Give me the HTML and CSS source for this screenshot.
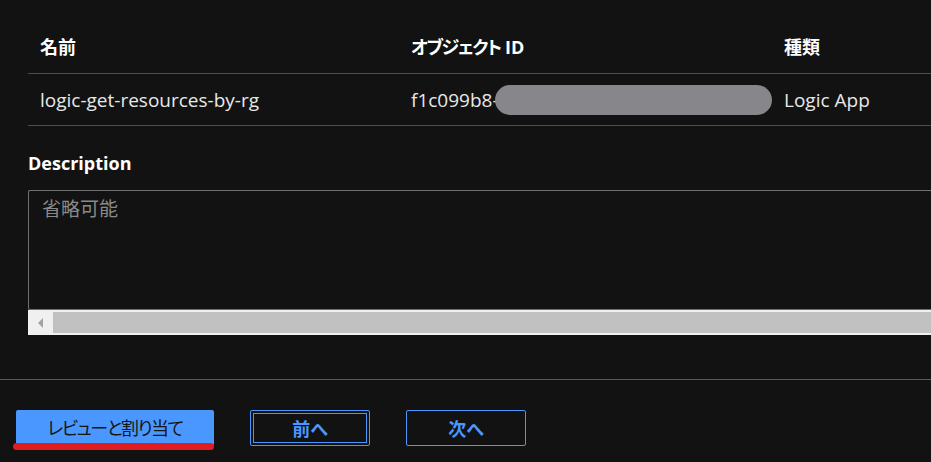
FILE: index.html
```html
<!DOCTYPE html>
<html>

<head>
    <title>割り当て</title>
    <link rel="stylesheet" href="styles.css">
</head>

<body>
    <div class="resource-table">
        <div class="table-row table-head">
            <div class="cell">名前</div>
            <div class="cell"><span class="tight">オブジェクト</span>&nbsp;ID</div>
            <div class="cell">種類</div>
        </div>
        <div class="table-row">
            <div class="cell">logic-get-resources-by-rg</div>
            <div class="cell">f1c099b8-<span class="redacted"></span></div>
            <div class="cell">Logic App</div>
        </div>
    </div>

    <div class="form-group">
        <label class="field-label">Description</label>
        <div class="textarea-box">
            <span class="placeholder">省略可能</span>
        </div>
        <div class="h-scrollbar">
            <span class="scroll-arrow"></span>
            <span class="scroll-thumb"></span>
        </div>
    </div>

    <div class="footer">
        <div class="primary-wrap">
            <button class="btn btn-primary">レビューと割り当て</button>
            <span class="highlight-mark"></span>
        </div>
        <button class="btn btn-outline focused"><span>前へ</span></button>
        <button class="btn btn-outline"><span>次へ</span></button>
    </div>
</body>

</html>
```

FILE: styles.css
```css
:root {
    --bg-color: #121212;
    --text-color: #e8e8e8;
    --text-strong: #ffffff;
    --text-muted: #8a8a8a;
    --line-color: #4e4e4e;
    --accent: #4a98ff;
    --mark-red: #e31c1f;
}

* {
    box-sizing: border-box;
    margin: 0;
    padding: 0;
}

body {
    width: 931px;
    height: 462px;
    overflow: hidden;
    background: var(--bg-color);
    color: var(--text-color);
    font-family: "Open Sans", "Noto Sans CJK JP", sans-serif;
    font-size: 19px;
    font-feature-settings: "palt";
}

.resource-table {
    margin: 20px 0 0 28px;
}

.table-row {
    display: grid;
    grid-template-columns: 371px 373px 1fr;
    align-items: center;
    height: 52px;
    line-height: 24px;
    border-bottom: 1px solid var(--line-color);
}

.table-head {
    height: 54px;
    font-size: 18px;
    font-weight: 700;
    color: var(--text-strong);
}

.table-head .cell {
    padding-top: 1px;
}

.tight {
    letter-spacing: -1.5px;
}

.cell {
    padding-left: 12px;
    display: flex;
    align-items: center;
    white-space: nowrap;
}

.redacted {
    display: inline-block;
    width: 278px;
    height: 30px;
    border-radius: 15px;
    background: #87878b;
    margin-left: -4px;
}

.form-group {
    margin: 25px 0 0 28px;
}

.field-label {
    display: block;
    font-size: 18px;
    font-weight: 700;
    color: var(--text-strong);
    line-height: 24px;
    margin-bottom: 15px;
}

.textarea-box {
    height: 120px;
    border: 1px solid #6f6f6f;
    border-right: none;
    border-radius: 2px 0 0 2px;
    padding: 5px 0 0 13px;
    line-height: 26px;
}

.placeholder {
    color: var(--text-muted);
    font-size: 19px;
}

.h-scrollbar {
    display: flex;
    align-items: center;
    height: 25px;
    background: #f0f0f0;
    padding: 2px 0;
}

.scroll-arrow {
    width: 25px;
    display: flex;
    justify-content: center;
}

.scroll-arrow::before {
    content: "";
    border-top: 5px solid transparent;
    border-bottom: 5px solid transparent;
    border-right: 5px solid #a3a3a3;
}

.scroll-thumb {
    flex: 1;
    height: 100%;
    background: #c1c1c1;
}

.footer {
    margin-top: 44px;
    border-top: 1px solid #5a5a5a;
    padding: 30px 0 0 16px;
    display: flex;
    gap: 36px;
}

.primary-wrap {
    position: relative;
}

.btn {
    height: 36px;
    font-family: inherit;
    font-feature-settings: "palt";
    font-size: 18px;
    border-radius: 2px;
    cursor: pointer;
}

.btn-primary {
    width: 198px;
    background: var(--accent);
    color: #161616;
    border: none;
    padding-bottom: 2px;
    letter-spacing: -1.5px;
}

.highlight-mark {
    position: absolute;
    left: -3px;
    right: 0;
    top: 33px;
    height: 7px;
    border-radius: 4px;
    background: var(--mark-red);
}

.btn-outline {
    width: 120px;
    background: transparent;
    color: var(--accent);
    border: 1px solid var(--accent);
    padding: 2px;
    font-weight: 600;
}

.btn-outline span {
    display: flex;
    align-items: center;
    justify-content: center;
    height: 100%;
    border: 1px solid transparent;
}

.focused span {
    border-color: var(--accent);
}
```
